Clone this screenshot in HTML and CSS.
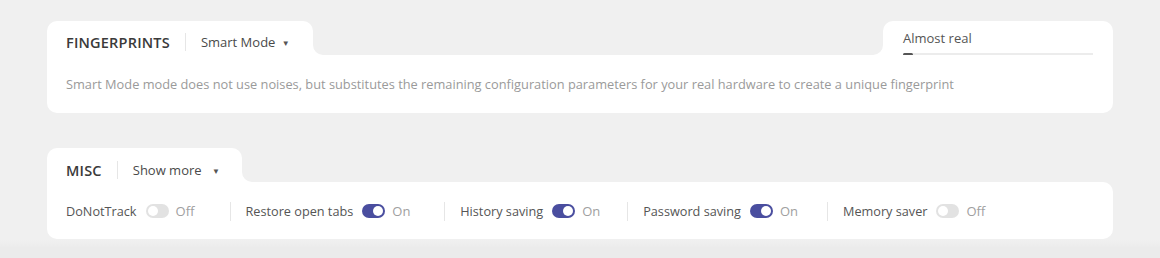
FILE: index.html
```html
<!DOCTYPE html>
<html>
<head>
<meta charset="utf-8">
<link rel="stylesheet" href="styles.css">
</head>
<body>
<div class="page">
  <section class="card">
    <div class="card-head">
      <div class="tab tab-left fp">
        <span class="title">FINGERPRINTS</span>
        <span class="vdiv"></span>
        <span class="select">Smart Mode <span class="caret">▼</span></span>
      </div>
      <div class="gap"></div>
      <div class="tab tab-right">
        <div class="level">
          <span class="level-label">Almost real</span>
          <div class="track"><div class="fill"></div></div>
        </div>
      </div>
    </div>
    <div class="card-body fp-body">
      <p class="desc">Smart Mode mode does not use noises, but substitutes the remaining configuration parameters for your real hardware to create a unique fingerprint</p>
    </div>
  </section>

  <section class="card">
    <div class="card-head">
      <div class="tab tab-left misc">
        <span class="title">MISC</span>
        <span class="vdiv"></span>
        <span class="select">Show more <span class="caret">▼</span></span>
      </div>
      <div class="gap gap-end"></div>
    </div>
    <div class="card-body misc-body">
      <div class="row">
        <div class="item w40"><span class="label">DoNotTrack</span><span class="toggle"></span><span class="status">Off</span></div>
        <span class="vdiv row-div"></span>
        <div class="item w38"><span class="label">Restore open tabs</span><span class="toggle on"></span><span class="status">On</span></div>
        <span class="vdiv row-div"></span>
        <div class="item w31"><span class="label">History saving</span><span class="toggle on"></span><span class="status">On</span></div>
        <span class="vdiv row-div"></span>
        <div class="item w33"><span class="label">Password saving</span><span class="toggle on"></span><span class="status">On</span></div>
        <span class="vdiv row-div"></span>
        <div class="item"><span class="label">Memory saver</span><span class="toggle"></span><span class="status">Off</span></div>
      </div>
    </div>
  </section>
</div>
</body>
</html>
```

FILE: styles.css
```css
* { box-sizing: border-box; }
html, body {
  margin: 0;
  padding: 0;
  background: #f0f0f0;
  font-family: "Open Sans", "Noto Sans", sans-serif;
}
.page {
  padding: 21px 47px 0 47px;
  display: flex;
  flex-direction: column;
  gap: 35px;
  height: 258px;
  background: linear-gradient(#f0f0f0 0, #f0f0f0 240px, #ebebeb 248px, #ebebeb 258px);
}
.card {
  width: 1066px;
  display: flex;
  flex-direction: column;
}
.card-head {
  display: flex;
  height: 34px;
}
.tab {
  background: #fff;
  border-radius: 10px 10px 0 0;
  display: flex;
  align-items: center;
}
.tab-left {
  padding: 8px 0 0 19px;
}
.tab-left.fp { width: 266px; }
.tab-left.misc { width: 195px; padding-top: 10px; }
.gap {
  flex: 1;
  background: #fff;
}
.gap::before {
  content: "";
  display: block;
  height: 100%;
  background: #f0f0f0;
  border-radius: 0 0 10px 10px;
}
.gap-end {
  background: linear-gradient(to right, #fff 10px, transparent 10px);
}
.gap-end::before {
  border-radius: 0 0 0 10px;
}
.title {
  font-size: 14.5px;
  font-weight: 600;
  color: #3a3a3a;
  letter-spacing: 0.2px;
}
.vdiv {
  width: 1px;
  height: 18px;
  background: #e6e6e6;
  margin: 0 15px;
}
.select {
  font-size: 13px;
  color: #4a4a4a;
}
.caret {
  font-size: 8px;
  margin-left: 3px;
  color: #555;
  position: relative;
  top: -1px;
}
.misc .caret { margin-left: 7px; }
.tab-right {
  width: 230px;
  padding: 9px 20px 0 20px;
  align-items: flex-start;
}
.level {
  display: flex;
  flex-direction: column;
  width: 100%;
}
.level-label {
  font-size: 13px;
  color: #555;
  line-height: 16px;
}
.track {
  margin-top: 7px;
  height: 2px;
  background: #ececec;
  width: 190px;
}
.fill {
  width: 10px;
  height: 3px;
  background: #555;
  border-radius: 2px;
}
.card-body {
  background: #fff;
  border-radius: 0 0 10px 10px;
  padding-left: 19px;
}
.fp-body {
  height: 58px;
  padding-top: 20px;
}
.desc {
  margin: 0;
  font-size: 12.8px;
  color: #9a9a9a;
  line-height: 18px;
  white-space: nowrap;
}
.misc-body {
  height: 57px;
  padding-top: 19px;
  border-radius: 0 10px 10px 10px;
}
.row {
  display: flex;
  align-items: center;
  height: 20px;
}
.item {
  display: flex;
  align-items: center;
}
.label {
  font-size: 12.7px;
  color: #555;
}
.status {
  font-size: 13px;
  color: #a0a0a0;
  min-width: 29px;
  margin-left: 7px;
}
.item.w40 .status { min-width: 40px; }
.item.w38 .status { min-width: 38px; }
.item.w31 .status { min-width: 31px; }
.item.w33 .status { min-width: 33px; }
.row-div { height: 19px; margin: 0 15px 0 14px; }
.toggle {
  width: 23px;
  height: 14px;
  border-radius: 7px;
  background: #e2e2e2;
  margin-left: 9px;
  position: relative;
}
.toggle::after {
  content: "";
  position: absolute;
  top: 2px;
  left: 2px;
  width: 10px;
  height: 10px;
  border-radius: 50%;
  background: #fff;
}
.toggle.on {
  background: #4a4e9f;
}
.toggle.on::after {
  left: 11px;
}
```
